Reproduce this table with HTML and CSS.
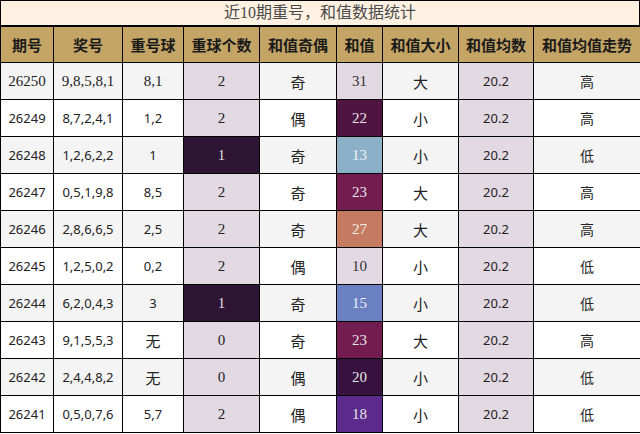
FILE: index.html
```html
<!DOCTYPE html>
<html lang="zh">
<head>
<meta charset="utf-8">
<link rel="stylesheet" href="styles.css">
</head>
<body>
<div class="title">近10期重号，和值数据统计</div>
<table class="stats">
<colgroup>
<col class="c1"><col class="c2"><col class="c3"><col class="c4"><col class="c5"><col class="c6"><col class="c7"><col class="c8"><col class="c9">
</colgroup>
<thead>
<tr><th>期号</th><th>奖号</th><th>重号球</th><th>重球个数</th><th>和值奇偶</th><th>和值</th><th>和值大小</th><th>和值均数</th><th>和值均值走势</th></tr>
</thead>
<tbody>
<tr class="odd first"><td class="num">26250</td><td class="num">9,8,5,8,1</td><td class="num">8,1</td><td class="cnt">2</td><td class="cn">奇</td><td class="sum s-light">31</td><td class="cn">大</td><td class="avg">20.2</td><td class="tr">高</td></tr>
<tr><td class="num">26249</td><td class="num">8,7,2,4,1</td><td class="num">1,2</td><td class="cnt">2</td><td class="cn">偶</td><td class="sum s22">22</td><td class="cn">小</td><td class="avg">20.2</td><td class="tr">高</td></tr>
<tr class="odd"><td class="num">26248</td><td class="num">1,2,6,2,2</td><td class="num">1</td><td class="cnt dark">1</td><td class="cn">奇</td><td class="sum s13">13</td><td class="cn">小</td><td class="avg">20.2</td><td class="tr">低</td></tr>
<tr><td class="num">26247</td><td class="num">0,5,1,9,8</td><td class="num">8,5</td><td class="cnt">2</td><td class="cn">奇</td><td class="sum s23">23</td><td class="cn">大</td><td class="avg">20.2</td><td class="tr">高</td></tr>
<tr class="odd"><td class="num">26246</td><td class="num">2,8,6,6,5</td><td class="num">2,5</td><td class="cnt">2</td><td class="cn">奇</td><td class="sum s27">27</td><td class="cn">大</td><td class="avg">20.2</td><td class="tr">高</td></tr>
<tr><td class="num">26245</td><td class="num">1,2,5,0,2</td><td class="num">0,2</td><td class="cnt">2</td><td class="cn">偶</td><td class="sum s-light">10</td><td class="cn">小</td><td class="avg">20.2</td><td class="tr">低</td></tr>
<tr class="odd"><td class="num">26244</td><td class="num">6,2,0,4,3</td><td class="num">3</td><td class="cnt dark">1</td><td class="cn">奇</td><td class="sum s15">15</td><td class="cn">小</td><td class="avg">20.2</td><td class="tr">低</td></tr>
<tr><td class="num">26243</td><td class="num">9,1,5,5,3</td><td class="cn">无</td><td class="cnt">0</td><td class="cn">奇</td><td class="sum s23">23</td><td class="cn">大</td><td class="avg">20.2</td><td class="tr">高</td></tr>
<tr class="odd"><td class="num">26242</td><td class="num">2,4,4,8,2</td><td class="cn">无</td><td class="cnt">0</td><td class="cn">偶</td><td class="sum s20">20</td><td class="cn">小</td><td class="avg">20.2</td><td class="tr">低</td></tr>
<tr><td class="num">26241</td><td class="num">0,5,0,7,6</td><td class="num">5,7</td><td class="cnt">2</td><td class="cn">偶</td><td class="sum s18">18</td><td class="cn">小</td><td class="avg">20.2</td><td class="tr">低</td></tr>
</tbody>
</table>
</body>
</html>
```

FILE: styles.css
```css
html, body {
  margin: 0;
  padding: 0;
  background: #ffffff;
}
body {
  width: 640px;
  font-family: "Noto Sans", "Noto Sans CJK SC", sans-serif;
}
.title {
  box-sizing: border-box;
  width: 640px;
  height: 26px;
  border: 1px solid #000;
  background: #fef1e2;
  color: #4a4a4a;
  font-family: "Liberation Serif", "Noto Sans CJK SC", serif;
  font-size: 16px;
  line-height: 24px;
  text-align: center;
}
.stats {
  width: 640px;
  border-collapse: collapse;
  table-layout: fixed;
  border: 1px solid #000;
}
.c1 { width: 53px; }
.c2 { width: 69px; }
.c3 { width: 61px; }
.c4 { width: 76px; }
.c5 { width: 77px; }
.c6 { width: 46px; }
.c7 { width: 76px; }
.c8 { width: 75px; }
.c9 { width: 107px; }
.stats th, .stats td {
  border: 1px solid #000;
  padding: 0;
  text-align: center;
  overflow: hidden;
  white-space: nowrap;
}
.stats th {
  height: 35px;
  background: #c4a566;
  color: #1a1a1a;
  font-family: "Noto Sans CJK SC", sans-serif;
  font-weight: 700;
  font-size: 15px;
}
.stats td {
  height: 36px;
  color: #222;
}
.stats tr.odd td { background: #f4f4f4; }
.num {
  font-family: "Noto Sans", "Noto Sans CJK SC", sans-serif;
  font-size: 13px;
  color: #333;
}
.first .num {
  font-family: "Liberation Serif", serif;
  font-size: 15px;
}
.cn {
  font-family: "Noto Sans CJK SC", sans-serif;
  font-size: 15px;
  color: #111;
}
.tr {
  font-family: "Noto Sans CJK SC", sans-serif;
  font-size: 14px;
  color: #333;
}
.cnt, .sum {
  font-family: "Liberation Serif", serif;
  font-size: 15px;
  color: #333;
}
.avg {
  font-family: "Noto Sans", sans-serif;
  font-size: 13px;
  color: #333;
}
.stats tr td.cnt,
.stats tr td.avg { background: #e3d9e3; }
.stats tr td.dark { background: #2f1535; color: #ddd; }
.stats tr td.s-light { background: #e3d9e3; color: #333; }
.stats tr td.s22 { background: #4f1441; color: #e6e6e6; }
.stats tr td.s13 { background: #8cb0c8; color: #eef2f5; }
.stats tr td.s23 { background: #731c4f; color: #e6e6e6; }
.stats tr td.s27 { background: #c47b61; color: #f3ece8; }
.stats tr td.s15 { background: #6a80c0; color: #eeeeff; }
.stats tr td.s20 { background: #38123f; color: #e6e6e6; }
.stats tr td.s18 { background: #5b2a8c; color: #e6e6e6; }
```
